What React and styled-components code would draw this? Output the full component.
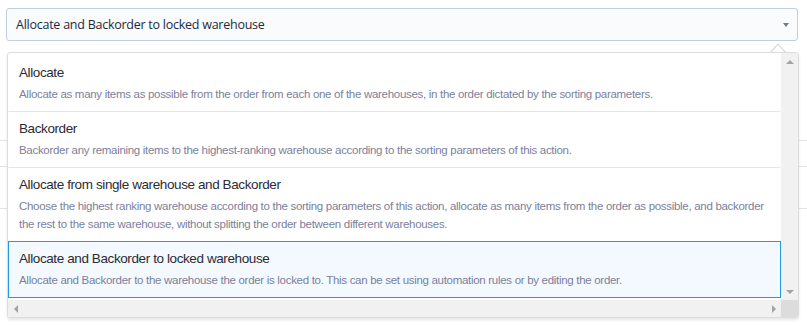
import React from "react"
import styled, { createGlobalStyle } from "styled-components"

const GlobalStyle = createGlobalStyle`
  html, body {
    margin: 0;
    padding: 0;
    background: #ffffff;
  }
  body {
    font-family: "Liberation Sans", Arial, sans-serif;
  }
`

const options = [
  {
    title: "Allocate",
    description:
      "Allocate as many items as possible from the order from each one of the warehouses, in the order dictated by the sorting parameters.",
  },
  {
    title: "Backorder",
    description:
      "Backorder any remaining items to the highest-ranking warehouse according to the sorting parameters of this action.",
  },
  {
    title: "Allocate from single warehouse and Backorder",
    description:
      "Choose the highest ranking warehouse according to the sorting parameters of this action, allocate as many items from the order as possible, and backorder the rest to the same warehouse, without splitting the order between different warehouses.",
  },
  {
    title: "Allocate and Backorder to locked warehouse",
    description:
      "Allocate and Backorder to the warehouse the order is locked to. This can be set using automation rules or by editing the order.",
  },
]

const Page = styled.div`
  position: relative;
  width: 807px;
  height: 327px;
  overflow: hidden;
  padding: 8px 9px 0 6px;
  box-sizing: border-box;
`

const Select = styled.div`
  height: 33px;
  box-sizing: border-box;
  border: 1px solid #c3cedc;
  border-radius: 3px;
  background: #f9fbfd;
  display: flex;
  align-items: center;
  justify-content: space-between;
  padding: 0 8px 0 9px;
  font-family: "Open Sans", sans-serif;
  font-size: 12.5px;
  letter-spacing: -0.25px;
  color: #1d2a3a;
`

const Caret = styled.span`
  width: 0;
  height: 0;
  border-left: 3.5px solid transparent;
  border-right: 3.5px solid transparent;
  border-top: 4px solid #6e7b8c;
`

/* form fields behind the open dropdown */
const Form = styled.div`
  margin: 32px -1px 0 1px;
`

const Field = styled.div`
  height: 31px;
  box-sizing: border-box;
  border: 1px solid #b4c1d4;
  border-radius: 3px;
  background: #ffffff;
`

const FormRow = styled.div`
  height: ${({ $h }) => $h}px;
  border-bottom: 1px solid #e4e4e4;
  margin: 0 -8px;
`

const Notch = styled.div`
  position: absolute;
  left: 770px;
  top: 43px;
  width: 0;
  height: 0;
  border-left: 8px solid transparent;
  border-right: 8px solid transparent;
  border-bottom: 9px solid #dcdcdc;
  &::after {
    content: "";
    position: absolute;
    left: -7px;
    top: 1.5px;
    border-left: 7px solid transparent;
    border-right: 7px solid transparent;
    border-bottom: 8px solid #ffffff;
  }
`

const Panel = styled.div`
  position: absolute;
  left: 7px;
  top: 52px;
  width: 792px;
  height: 266px;
  box-sizing: border-box;
  border: 1px solid #dddddd;
  border-radius: 3px;
  background: #ffffff;
  box-shadow: 0 2px 3px rgba(0, 0, 0, 0.1);
  display: grid;
  grid-template-columns: 1fr 17px;
  grid-template-rows: 1fr 17px;
  overflow: hidden;
`

const List = styled.div`
  padding: 3px 0 0;
  overflow: hidden;
`

const Item = styled.div`
  padding: 7px 10px 8px;
  border: 1px solid ${({ $selected }) => ($selected ? "#2399e4" : "transparent")};
  border-bottom-color: ${({ $selected, $last }) =>
    $selected ? "#2399e4" : $last ? "transparent" : "#e6e6e6"};
  border-top-width: ${({ $selected }) => ($selected ? "1px" : "0")};
  background: ${({ $selected }) => ($selected ? "#f3f9fe" : "#ffffff")};
  margin-top: ${({ $selected }) => ($selected ? "-1px" : "0")};
`

const Title = styled.div`
  font-size: 13.5px;
  letter-spacing: -0.4px;
  line-height: 20px;
  color: #2b2b33;
`

const Description = styled.div`
  margin-top: 2px;
  font-size: 11.5px;
  letter-spacing: -0.3px;
  line-height: 18px;
  color: #7b7f9b;
`

const VScroll = styled.div`
  background: #f1f1f1;
  display: flex;
  flex-direction: column;
  justify-content: space-between;
  align-items: center;
  padding: 7px 0 6px;
`

const HScroll = styled.div`
  background: #f1f1f1;
  display: flex;
  justify-content: space-between;
  align-items: center;
  padding: 0 5px 0 6px;
`

const Corner = styled.div`
  background: #dcdcdc;
`

const Arrow = styled.span`
  width: 0;
  height: 0;
  ${({ $dir }) =>
    $dir === "up"
      ? "border-left: 4px solid transparent; border-right: 4px solid transparent; border-bottom: 4px solid #a3a3a3;"
      : $dir === "down"
      ? "border-left: 4px solid transparent; border-right: 4px solid transparent; border-top: 4px solid #a3a3a3;"
      : $dir === "left"
      ? "border-top: 4px solid transparent; border-bottom: 4px solid transparent; border-right: 4px solid #a3a3a3;"
      : "border-top: 4px solid transparent; border-bottom: 4px solid transparent; border-left: 4px solid #a3a3a3;"}
`

const App = () => {
  const selected = 3

  return (
    <>
      <GlobalStyle />
      <Page>
        <Select>
          <span>Allocate and Backorder to locked warehouse</span>
          <Caret />
        </Select>

        <Form>
          <Field />
          <FormRow $h={36} />
          <FormRow $h={25} />
          <FormRow $h={41} />
        </Form>

        <Notch />
        <Panel>
          <List>
            {options.map((opt, i) => (
              <Item key={opt.title} $selected={i === selected} $last={i === options.length - 1}>
                <Title>{opt.title}</Title>
                <Description>{opt.description}</Description>
              </Item>
            ))}
          </List>
          <VScroll>
            <Arrow $dir="up" />
            <Arrow $dir="down" />
          </VScroll>
          <HScroll>
            <Arrow $dir="left" />
            <Arrow $dir="right" />
          </HScroll>
          <Corner />
        </Panel>
      </Page>
    </>
  )
}

export default App
